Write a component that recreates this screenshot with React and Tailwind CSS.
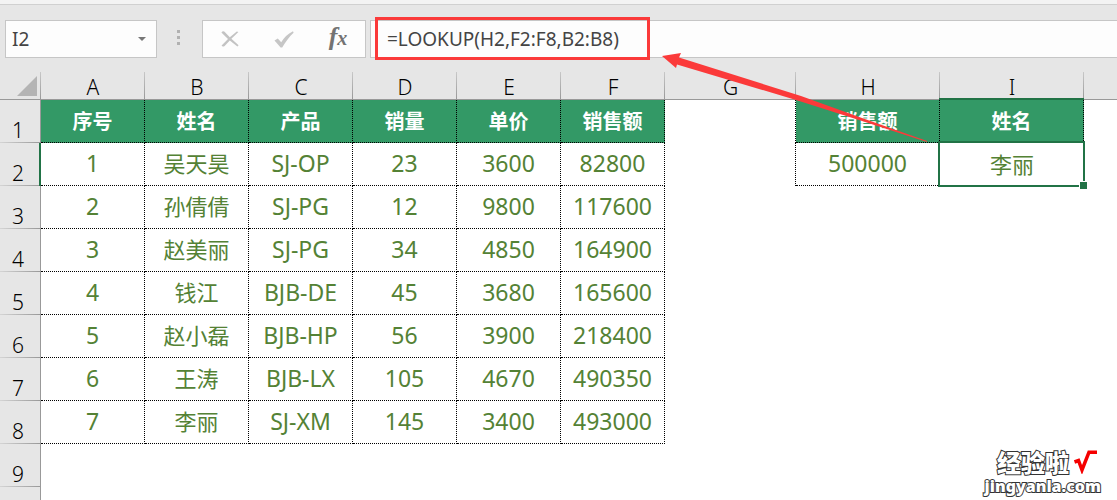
const HEADINGS = ["序号", "姓名", "产品", "销量", "单价", "销售额"];

const RECORDS = [
  ["1", "吴天昊", "SJ-OP", "23", "3600", "82800"],
  ["2", "孙倩倩", "SJ-PG", "12", "9800", "117600"],
  ["3", "赵美丽", "SJ-PG", "34", "4850", "164900"],
  ["4", "钱江", "BJB-DE", "45", "3680", "165600"],
  ["5", "赵小磊", "BJB-HP", "56", "3900", "218400"],
  ["6", "王涛", "BJB-LX", "105", "4670", "490350"],
  ["7", "李丽", "SJ-XM", "145", "3400", "493000"],
];

const COLUMNS = ["A", "B", "C", "D", "E", "F", "G", "H", "I"];

const HEAD_CELL =
  "border-b border-r border-dotted border-black bg-[#339966] px-0 pt-0.5 pb-0 text-center align-middle text-[20px] leading-6 font-bold text-white";
const DATA_CELL =
  "border-b border-r border-dotted border-black px-0 pt-0 pb-0.5 text-center align-middle leading-7 text-[#548235]";
const ROW_HEAD =
  "relative h-[43px] border-r border-[#999999] bg-[#e6e6e6] bg-[linear-gradient(to_right,#d4d4d4,#999999)] bg-[length:100%_1px] bg-bottom bg-no-repeat pt-0 pr-1 pb-px pl-0 text-center align-bottom text-[21px] leading-6 font-light text-black";

function isChinese(value) {
  return /[\u4e00-\u9fff]/.test(value);
}

function DataCell({ value }) {
  return (
    <td className={`${DATA_CELL} ${isChinese(value) ? "text-[22px]" : "text-[23px]"}`}>{value}</td>
  );
}

function FormulaBar() {
  return (
    <div className="flex h-[38px] items-stretch pl-[5px]">
      <div className="flex w-[152px] items-center border border-[#c6c6c6] bg-[#fdfdfd]">
        <input
          aria-label="Name box"
          defaultValue="I2"
          className="w-full min-w-0 flex-1 bg-transparent pl-1.5 text-[19px] leading-6 text-[#444444] outline-none"
        />
        <button type="button" aria-label="Show names" className="flex h-full w-7 items-center justify-center">
          <svg width="8" height="4" viewBox="0 0 8 4" fill="#777777">
            <path d="M0 0H8L4 4Z" />
          </svg>
        </button>
      </div>
      <div className="flex w-[43px] flex-col items-center justify-center gap-[3px] pb-1">
        <span className="size-[3px] bg-[#b1b1b1]" />
        <span className="size-[3px] bg-[#b1b1b1]" />
        <span className="size-[3px] bg-[#b1b1b1]" />
      </div>
      <div className="ml-0.5 grid w-[164px] grid-cols-3 border border-[#c6c6c6] bg-[#fdfdfd]">
        <button type="button" aria-label="Cancel" className="flex items-center justify-center">
          <svg width="18" height="16" viewBox="0 0 18 16" fill="#c3c3c3">
            <path d="M0.4 1.4C1.6 0 3 0 4 1.2L8.8 6.2L15.8 0.4L17.4 1L10.4 7.8L17.6 14.2L16.4 15.4L8.8 9.4L3.6 15C2.4 16 1 15.6 0.6 14.6L7 8Z" />
          </svg>
        </button>
        <button type="button" aria-label="Enter" className="flex items-center justify-center">
          <svg width="20" height="17" viewBox="0 0 20 17" fill="#c6c6c6">
            <path d="M0.5 9.5L3.8 7.5L7.2 11.2C10 6.8 13.5 3 19 0.3L19.6 1.8C15 6 11.5 11 8.2 16.6H6.6Z" />
          </svg>
        </button>
        <button
          type="button"
          aria-label="Insert function"
          className="flex items-baseline justify-center pt-0.5 font-['Liberation_Serif',serif] text-[26px] leading-7 font-bold text-[#737373] italic"
        >
          f<span className="text-[20px]">x</span>
        </button>
      </div>
      <div className="relative ml-1 flex flex-1 items-center border-y border-l border-[#c6c6c6] bg-[#fdfdfd]">
        <input
          aria-label="Formula"
          defaultValue="=LOOKUP(H2,F2:F8,B2:B8)"
          className="w-full bg-transparent pl-4 text-[19px] leading-6 text-[#444444] outline-none"
        />
        <div className="pointer-events-none absolute -top-1 left-1 h-[43px] w-[275px] border-3 border-[#fb3a3a]" />
      </div>
    </div>
  );
}

function Sheet() {
  return (
    <table className="w-full table-fixed border-separate border-spacing-0 bg-white">
      <colgroup>
        <col className="w-[41px]" />
        <col className="w-[104px]" />
        <col className="w-[104px]" />
        <col className="w-[104px]" />
        <col className="w-[104px]" />
        <col className="w-[104px]" />
        <col className="w-[104px]" />
        <col className="w-[131px]" />
        <col className="w-[144px]" />
        <col className="w-[144px]" />
        <col />
      </colgroup>
      <thead>
        <tr>
          <td className="h-7 border-b border-[#999999] bg-[#e6e6e6] bg-[linear-gradient(#c8c8c8,#999999)] bg-[length:1px_100%] bg-right bg-no-repeat p-0">
            <svg className="ml-[17px]" width="20" height="20" viewBox="0 0 20 20" fill="#b4b4b4">
              <path d="M20 0V20H0Z" />
            </svg>
          </td>
          {COLUMNS.map((letter) => (
            <th
              key={letter}
              scope="col"
              className="relative h-7 border-b border-[#999999] bg-[#e6e6e6] bg-[linear-gradient(#c8c8c8,#999999)] bg-[length:1px_100%] bg-right bg-no-repeat p-0 text-center align-bottom text-[21px] leading-6 font-light text-black"
            >
              {letter}
              {letter === "I" && <span className="absolute -bottom-px -left-px right-0 h-0.5 bg-[#217346]" />}
            </th>
          ))}
          <td className="border-b border-[#999999] bg-[#e6e6e6] p-0" />
        </tr>
      </thead>
      <tbody>
        <tr>
          <th scope="row" className={ROW_HEAD}>1</th>
          {HEADINGS.map((heading) => (
            <td key={heading} className={HEAD_CELL}>{heading}</td>
          ))}
          <td className="border-r border-dotted border-black p-0" />
          <td className={HEAD_CELL}>销售额</td>
          <td className={HEAD_CELL}>姓名</td>
          <td />
        </tr>
        {RECORDS.map((record, index) => (
          <tr key={record[0]}>
            <th scope="row" className={ROW_HEAD}>
              {index + 2}
              {index === 0 && <span className="absolute inset-y-0 -right-px w-0.5 bg-[#217346]" />}
            </th>
            {record.map((value, column) => (
              <DataCell key={column} value={value} />
            ))}
            {index === 0 && (
              <>
                <td className="border-r border-dotted border-black p-0" />
                <DataCell value="500000" />
                <td className="relative px-0 pt-0 pb-0.5 text-center align-middle text-[22px] leading-7 text-[#548235]">
                  李丽
                  <span className="absolute -top-0.5 -right-px -bottom-px -left-0.5 border-2 border-[#217346]" />
                  <span className="absolute -right-[3px] -bottom-[3px] size-2 border-t border-l border-white bg-[#217346]" />
                </td>
                <td />
              </>
            )}
            {index > 0 && <td colSpan={4} />}
          </tr>
        ))}
        <tr>
          <th scope="row" className={ROW_HEAD}>9</th>
          <td colSpan={10} />
        </tr>
        <tr>
          <td className={ROW_HEAD} />
          <td colSpan={10} />
        </tr>
      </tbody>
    </table>
  );
}

function Watermark() {
  return (
    <div className="absolute right-4 bottom-1 flex flex-col items-end font-black text-white [-webkit-text-stroke:2px_#333333] [paint-order:stroke_fill]">
      <div className="flex items-center gap-1 pr-1">
        <span className="font-['Noto_Sans_CJK_SC',sans-serif] text-[24px] leading-7 [font-style:oblique_8deg]">
          经验啦
        </span>
        <svg width="24" height="24" viewBox="0 0 24 24" fill="none" stroke="#f50000" strokeWidth="3.5">
          <path d="M1.5 12L5.5 10.5L9 20L16 2.2H24" />
        </svg>
      </div>
      <span className="text-[16px] leading-5">jingyanla.com</span>
    </div>
  );
}

export default function App() {
  return (
    <main className="relative flex h-screen flex-col overflow-hidden bg-[#e6e6e6] font-['Noto_Sans','Noto_Sans_CJK_SC',sans-serif]">
      <div className="h-[5px] shrink-0 border-b border-[#d0d0d0] bg-[#f3f3f3]" />
      <div className="pt-[15px] pb-[14px]">
        <FormulaBar />
      </div>
      <div className="flex-1 bg-white">
        <Sheet />
      </div>
      <svg
        className="pointer-events-none absolute top-[53px] left-[662px]"
        width="266"
        height="90"
        viewBox="0 0 266 90"
        fill="#fb3a3a"
        aria-hidden="true"
      >
        <path d="M0 3L19 0L17 4.5L139 43L200 65L265 88V89L200 68L134 47L15 11.5L14 15Z" />
      </svg>
      <Watermark />
    </main>
  );
}
